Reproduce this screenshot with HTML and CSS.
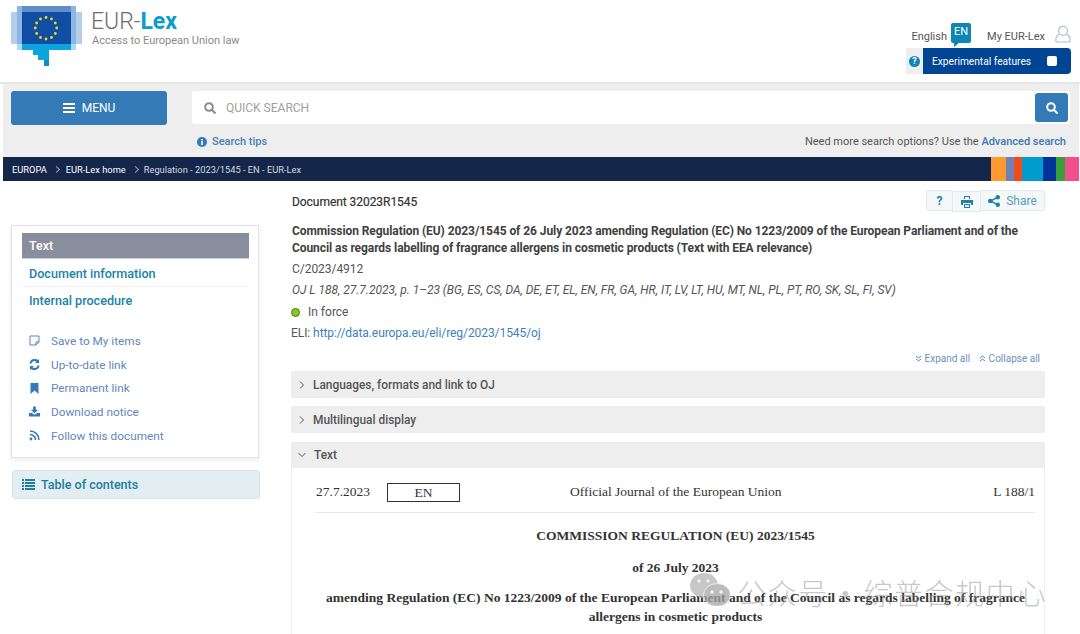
FILE: index.html
```html
<!DOCTYPE html>
<html lang="en">
<head>
<meta charset="utf-8">
<title>EUR-Lex - Regulation 2023/1545</title>
<link rel="stylesheet" href="styles.css">
</head>
<body>
<div class="page">
  <header class="top">
    <div class="brand">
      <svg class="logo" width="71" height="68" viewBox="0 0 71 68">
        <rect x="0" y="12" width="71" height="32" fill="#b4cdea"/>
        <rect x="6" y="6" width="59" height="44" fill="#8fb6e2"/>
        <rect x="11" y="6" width="49" height="6" fill="#5f8fcb"/>
        <rect x="11" y="12" width="49" height="32" fill="#0f4ea3"/>
        <rect x="6" y="44" width="59" height="6" fill="#a8dcf0"/>
        <rect x="11" y="44" width="49" height="6" fill="#0ba4dc"/>
        <rect x="22" y="50" width="16" height="5" fill="#0ba4dc"/>
        <rect x="27" y="55" width="11" height="5" fill="#0ba4dc"/>
        <rect x="33" y="60" width="5" height="6" fill="#0b8fc4"/>
        <g fill="#f5d327">
          <circle cx="35" cy="17.500" r="1.400"/><circle cx="40.500" cy="19" r="1.400"/><circle cx="44.300" cy="23" r="1.400"/>
          <circle cx="45.700" cy="28" r="1.400"/><circle cx="44.300" cy="33.500" r="1.400"/><circle cx="40.500" cy="37.500" r="1.400"/>
          <circle cx="35" cy="39" r="1.400"/><circle cx="29.500" cy="37.500" r="1.400"/><circle cx="25.700" cy="33.500" r="1.400"/>
          <circle cx="24.300" cy="28" r="1.400"/><circle cx="25.700" cy="23" r="1.400"/><circle cx="29.500" cy="19" r="1.400"/>
        </g>
      </svg>
      <div class="brand-text">
        <div class="brand-name">EUR-<b>Lex</b></div>
        <div class="brand-sub">Access to European Union law</div>
      </div>
    </div>
    <div class="tools">
      <div class="tools-row">
        <span class="lang">English</span>
        <span class="lang-badge">EN</span>
        <span class="my">My EUR-Lex</span>
        <svg class="user" width="16" height="18" viewBox="0 0 18 20" fill="none" stroke="#a9c3dc" stroke-width="1.400">
          <circle cx="9" cy="6.500" r="5"/>
          <path d="M5 10.500C2.500 11.500 1 13.500 1 16v1.500a1.500 1.500 0 0 0 1.500 1.500h13a1.500 1.500 0 0 0 1.500-1.500V16c0-2.500-1.500-4.500-4-5.500"/>
        </svg>
      </div>
      <div class="exp">
        <span class="exp-help"><span class="help-dot">?</span></span>
        <span class="exp-main">Experimental features<span class="exp-check"></span></span>
      </div>
    </div>
  </header>

  <section class="searchband">
    <div class="search-row">
      <button class="menu-btn">
        <svg width="12" height="10" viewBox="0 0 12 10" fill="#fff"><rect width="12" height="2"/><rect y="4" width="12" height="2"/><rect y="8" width="12" height="2"/></svg>
        MENU
      </button>
      <div class="search-box">
        <svg class="search-ico" width="12" height="12" viewBox="0 0 12 12" fill="none" stroke="#8a8a8a" stroke-width="2"><circle cx="5" cy="5" r="3.800"/><path d="M8 8l3.500 3.500"/></svg>
        <span class="search-ph">QUICK SEARCH</span>
        <span class="search-btn">
          <svg width="12" height="12" viewBox="0 0 12 12" fill="none" stroke="#fff" stroke-width="2"><circle cx="5" cy="5" r="3.800"/><path d="M8 8l3.500 3.500"/></svg>
        </span>
      </div>
    </div>
    <div class="tips-row">
      <span class="tips">
        <svg width="10" height="10" viewBox="0 0 10 10"><circle cx="5" cy="5" r="5" fill="#337ab7"/><rect x="4.200" y="4.200" width="1.600" height="3.800" fill="#fff"/><rect x="4.200" y="2" width="1.600" height="1.500" fill="#fff"/></svg>
        Search tips
      </span>
      <span class="adv">Need more search options? Use the <a>Advanced search</a></span>
    </div>
  </section>

  <nav class="crumbs">
    <span class="crumb-list">
      <span>EUROPA</span><i class="sep"></i><span>EUR-Lex home</span><i class="sep"></i><span class="cur">Regulation - 2023/1545 - EN - EUR-Lex</span>
    </span>
    <span class="flag">
      <i class="c1"></i><i class="c2"></i><i class="c3"></i><i class="c4"></i><i class="c5"></i><i class="c6"></i><i class="c7"></i>
    </span>
  </nav>

  <div class="content">
    <aside class="side">
      <div class="side-card">
        <div class="tab-active">Text</div>
        <div class="tab tab-line">Document information</div>
        <div class="tab">Internal procedure</div>
        <ul class="actions">
          <li>
            <svg width="11" height="11" viewBox="0 0 11 11" fill="none" stroke="#5a84b5" stroke-width="1"><path d="M1 1h9v6l-3 3H1z"/><path d="M7 10V7h3"/></svg>
            Save to My items
          </li>
          <li>
            <svg width="11" height="11" viewBox="0 0 11 11" fill="none" stroke="#337ab7" stroke-width="2"><path d="M1.500 4.500A4 4 0 0 1 9 3"/><path d="M9.500 6.500A4 4 0 0 1 2 8"/><path d="M10 0v4H6z" fill="#337ab7" stroke="none"/><path d="M1 11V7h4z" fill="#337ab7" stroke="none"/></svg>
            Up-to-date link
          </li>
          <li>
            <svg width="11" height="11" viewBox="0 0 11 11" fill="#337ab7"><path d="M1.500 0h8v11L5.500 7.500 1.500 11z"/></svg>
            Permanent link
          </li>
          <li>
            <svg width="12" height="11" viewBox="0 0 12 11" fill="#337ab7"><path d="M4.500 0h3v3.500H10L6 7.500 2 3.500h2.500z"/><path d="M0 7h3l3 2 3-2h3v4H0z"/></svg>
            Download notice
          </li>
          <li>
            <svg width="11" height="11" viewBox="0 0 11 11" fill="none" stroke="#337ab7" stroke-width="1.500"><circle cx="2" cy="9" r="1.400" fill="#337ab7" stroke="none"/><path d="M1 4.500A5.500 5.500 0 0 1 6.500 10"/><path d="M1 1a9 9 0 0 1 9 9"/></svg>
            Follow this document
          </li>
        </ul>
      </div>
      <div class="toc">
        <svg width="13" height="11" viewBox="0 0 13 11" fill="#1f7f9f"><rect width="2" height="2"/><rect x="3" width="10" height="2"/><rect y="3" width="2" height="2"/><rect x="3" y="3" width="10" height="2"/><rect y="6" width="2" height="2"/><rect x="3" y="6" width="10" height="2"/><rect y="9" width="2" height="2"/><rect x="3" y="9" width="10" height="2"/></svg>
        Table of contents
      </div>
    </aside>

    <main class="main">
      <div class="doc-head">
        <span class="doc-id">Document 32023R1545</span>
        <span class="doc-btns">
          <span class="btn btn-help">?</span>
          <span class="btn btn-print">
            <svg width="12" height="12" viewBox="0 0 12 12" fill="#1f7fa8"><path d="M3 0h6v3H8V1H4v2H3z"/><path d="M0 4h12v5H10V7H2v2H0z"/><path d="M3 8h6v4H3zm1 1v2h4V9z" fill-rule="evenodd"/></svg>
          </span>
          <span class="btn btn-share">
            <svg width="12" height="12" viewBox="0 0 12 12" fill="#1f7fa8" stroke="#1f7fa8"><circle cx="9.800" cy="2.300" r="2.200" stroke="none"/><circle cx="2.300" cy="6" r="2.300" stroke="none"/><circle cx="9.800" cy="9.700" r="2.200" stroke="none"/><path d="M9.800 2.300L2.300 6l7.500 3.700" fill="none" stroke-width="1.500"/></svg>
            Share
          </span>
        </span>
      </div>
      <h1 class="doc-title">Commission Regulation (EU) 2023/1545 of 26 July 2023 amending Regulation (EC) No 1223/2009 of the European Parliament and of the Council as regards labelling of fragrance allergens in cosmetic products (Text with EEA relevance)</h1>
      <p class="meta m-c">C/2023/4912</p>
      <p class="meta m-oj">OJ L 188, 27.7.2023, p. 1–23 (BG, ES, CS, DA, DE, ET, EL, EN, FR, GA, HR, IT, LV, LT, HU, MT, NL, PL, PT, RO, SK, SL, FI, SV)</p>
      <p class="meta m-force"><span class="dot"></span>In force</p>
      <p class="meta m-eli">ELI: <a>http://data.europa.eu/eli/reg/2023/1545/oj</a></p>
      <div class="expand">
        <span><svg width="7" height="7" viewBox="0 0 7 7" fill="none" stroke="#5a84b5"><path d="M1 1l2.500 2L6 1M1 4l2.500 2L6 4"/></svg> Expand all</span>
        <span><svg width="7" height="7" viewBox="0 0 7 7" fill="none" stroke="#5a84b5"><path d="M1 3l2.500-2L6 3M1 6l2.500-2L6 6"/></svg> Collapse all</span>
      </div>
      <div class="acc"><svg width="6" height="8" viewBox="0 0 6 8" fill="none" stroke="#555"><path d="M1 .5L4.500 4 1 7.500"/></svg>Languages, formats and link to OJ</div>
      <div class="acc"><svg width="6" height="8" viewBox="0 0 6 8" fill="none" stroke="#555"><path d="M1 .5L4.500 4 1 7.500"/></svg>Multilingual display</div>
      <div class="acc acc-open"><svg width="8" height="6" viewBox="0 0 8 6" fill="none" stroke="#555"><path d="M.5 1L4 4.500 7.500 1"/></svg>Text</div>
      <article class="oj">
        <div class="oj-head">
          <span class="oj-date">27.7.2023</span>
          <span class="oj-lang">EN</span>
          <span class="oj-name">Official Journal of the European Union</span>
          <span class="oj-page">L 188/1</span>
        </div>
        <p class="t1">COMMISSION REGULATION (EU) 2023/1545</p>
        <p class="t2">of 26 July 2023</p>
        <p class="t3">amending Regulation (EC) No 1223/2009 of the European Parliament and of the Council as regards labelling of fragrance allergens in cosmetic products</p>
      </article>
    </main>
  </div>

  <div class="watermark">
    <svg class="wm-icon" width="40" height="33" viewBox="0 0 40 33">
      <ellipse cx="14" cy="12.500" rx="14" ry="12.500" fill="#b5b5b5"/>
      <ellipse cx="27" cy="22" rx="13.500" ry="11.500" fill="#a6a6a6" stroke="#e8e8e8"/>
      <circle cx="9" cy="8" r="1.700" fill="#eee"/><circle cx="18" cy="8" r="1.700" fill="#eee"/>
      <circle cx="22" cy="19" r="1.700" fill="#eee"/><circle cx="31" cy="19" r="1.700" fill="#eee"/>
    </svg>
    <span class="wm-text">公众号 · 综普合规中心</span>
  </div>
</div>
</body>
</html>
```
FILE: styles.css
```css
* { box-sizing: border-box; }
html, body { margin: 0; padding: 0; height: 634px; overflow: hidden; background: #fff; }
body { font-family: Roboto, "Liberation Sans", sans-serif; font-size: 12px; color: #444; }
.page { position: relative; width: 1080px; height: 634px; overflow: hidden; }

/* header */
.top { height: 84px; display: flex; justify-content: space-between; padding: 0 9px 0 11px; border-bottom: 2px solid #e6e6e6; }
.brand { display: flex; align-items: flex-start; gap: 9px; }
.logo { display: block; }
.brand-text { padding-top: 8px; }
.brand-name { font-size: 23px; line-height: 27px; color: #6d6d6d; font-weight: 300; }
.brand-name b { color: #0b9bcf; font-weight: 700; }
.brand-sub { font-size: 11px; line-height: 13px; color: #8a8a8a; margin-top: -1px; padding-left: 1px; letter-spacing: -.01px; }
.tools { display: flex; flex-direction: column; align-items: flex-end; padding-top: 22px; }
.tools-row { display: flex; align-items: flex-start; height: 26px; font-size: 11px; color: #555; }
.lang { margin-top: 8px; margin-right: 4px; }
.lang-badge { position: relative; width: 20px; height: 20px; margin-top: 1px; background: #0e86b4; color: #fff; text-align: center; line-height: 18px; font-size: 11px; border-radius: 2px; margin-right: 16px; }
.lang-badge::after { content: ""; position: absolute; left: 3px; bottom: -4px; border-top: 5px solid #0e86b4; border-right: 6px solid transparent; }
.my { margin-top: 8px; margin-right: 10px; }
.user { margin-top: 3px; }
.exp { display: flex; height: 26px; width: 165px; }
.exp-help { width: 17px; background: #eee; display: flex; align-items: center; justify-content: center; }
.help-dot { width: 11px; height: 11px; border-radius: 50%; background: #0e86b4; color: #fff; font-size: 9px; font-weight: 700; line-height: 11px; text-align: center; }
.exp-main { flex: 1; background: #004494; color: #fff; font-size: 10.200px; display: flex; align-items: center; justify-content: space-between; padding: 0 14px 0 9px; border-radius: 0 4px 4px 0; }
.exp-check { width: 10px; height: 10px; background: #fff; border-radius: 2px; }

/* search */
.searchband { height: 73px; margin: 0 1px 0 3px; background: #eee; padding: 7px 9px 0 8px; }
.search-row { display: flex; gap: 25px; }
.menu-btn { width: 156px; height: 34px; border: 0; border-radius: 3px; background: #337ab7; color: #fff; font: 12px Roboto, sans-serif; display: flex; align-items: center; justify-content: center; gap: 7px; }
.search-box { flex: 1; height: 33px; background: #fff; border-radius: 3px; display: flex; align-items: center; padding: 0 2px 0 12px; }
.search-ico { margin-right: 10px; }
.search-ph { flex: 1; color: #a0a0a0; font-size: 12px; }
.search-btn { width: 33px; height: 29px; background: #337ab7; border-radius: 3px; display: flex; align-items: center; justify-content: center; }
.tips-row { display: flex; justify-content: space-between; padding: 10px 4px 0 186px; font-size: 11px; line-height: 14px; }
.tips { color: #4a7fb5; font-weight: 500; display: flex; align-items: center; gap: 5px; }
.adv { color: #555; }
.adv a { color: #3c78b0; font-weight: 500; }

/* breadcrumb */
.crumbs { height: 24px; margin: 0 1px 0 3px; background: #14264a; display: flex; justify-content: space-between; color: #fff; font-size: 9.300px; padding-left: 9px; }
.crumb-list { display: flex; align-items: center; }
.cur { color: #d6dae3; margin-left: -1px; }
.sep { width: 5px; height: 5px; border-top: 1px solid #98a2b5; border-right: 1px solid #98a2b5; transform: rotate(45deg); margin: 0 7px 0 7px; }
.flag { display: flex; }
.flag i { display: block; height: 24px; }
.c1 { width: 15px; background: #fe9a31; }
.c2 { width: 8px; background: #6e82b5; }
.c3 { width: 8px; background: #f14a1e; }
.c4 { width: 21px; background: #009cce; }
.c5 { width: 13px; background: #003399; }
.c6 { width: 9px; background: #399e3a; }
.c7 { width: 14px; background: #f0518e; }

/* layout */
.content { display: flex; padding: 0 35px 0 11px; gap: 32px; }
.side { width: 248px; flex: none; padding-top: 44px; }
.side-card { height: 233px; border: 1px solid #dde3e8; box-shadow: 0 2px 5px rgba(0,0,0,.08); padding: 7px 9px 0 10px; }
.tab-active { height: 26px; margin-bottom: 1px; background: #898e9e; border-bottom: 1px solid #c5cdd6; color: #fff; font-weight: 500; font-size: 12.500px; line-height: 25px; padding-left: 7px; }
.tab { height: 27px; color: #1a83a8; font-size: 12.600px; font-weight: 500; line-height: 28px; padding-left: 7px; }
.tab-line { border-bottom: 1px solid #eef0f2; }
.actions { list-style: none; margin: 15px 0 0; padding: 0 0 0 7px; color: #5f87ba; font-size: 11.800px; }
.actions li { height: 23.700px; display: flex; align-items: center; gap: 11px; }
.actions svg { width: 11px; flex: none; }
.toc { margin: 12px -1px 0 1px; height: 29px; background: #e3eef3; border: 1px solid #d5e2e9; border-radius: 3px; color: #1a7da0; font-size: 12.500px; font-weight: 500; display: flex; align-items: center; gap: 6px; padding-left: 9px; }

/* main */
.main { width: 754px; flex: none; }
.doc-head { height: 42px; display: flex; justify-content: space-between; padding-top: 9px; }
.doc-id { font-size: 12px; line-height: 24px; font-weight: 400; color: #333; padding-left: 1px; -webkit-text-stroke: .2px #333; letter-spacing: -.05px; }
.doc-btns { display: flex; height: 21px; }
.btn { display: flex; align-items: center; justify-content: center; border: 1px solid #e2eaee; background: #f5f8f9; color: #1f7fa8; }
.btn-help { width: 27px; font-weight: 700; border-radius: 3px 0 0 3px; }
.btn-print { width: 29px; margin: 1px 0 -1px -1px; }
.btn-share { width: 64px; gap: 6px; border-radius: 0 3px 3px 0; color: #5a9cbd; border-left: 0; }
.doc-title { margin: 0; padding-left: 1px; font-size: 12px; line-height: 17px; font-weight: 700; color: #404040; letter-spacing: -.075px; }
.meta { margin: 0; padding-left: 1px; font-size: 12px; line-height: 16px; color: #555; }
.m-c { margin-top: 4px; letter-spacing: -.04px; }
.m-oj { margin-top: 5px; font-style: italic; letter-spacing: -.02px; }
.m-force { margin-top: 6px; padding-left: 0; display: flex; align-items: center; }
.dot { width: 9px; height: 9px; border-radius: 50%; background: #8cc620; border: 1px solid #4f7a12; margin-right: 8px; }
.m-eli { margin-top: 5px; padding-left: 0; letter-spacing: -.07px; }
.m-eli a { color: #3c82bb; }
.expand { display: flex; justify-content: flex-end; gap: 9px; height: 30px; padding: 12px 5px 0 0; color: #6d8fbe; font-size: 10px; line-height: 12px; }
.acc { height: 27px; background: #eee; margin-bottom: 8px; display: flex; align-items: center; gap: 8px; padding-left: 8px; font-size: 11.900px; font-weight: 500; color: #555; }
.acc-open { height: 26px; margin: 9px 0 0; }
.acc-open svg { margin-left: -1px; }
.oj { border-left: 1px solid #eee; border-right: 1px solid #eee; padding: 0 9px 0 24px; height: 170px; font-family: "Liberation Serif", serif; color: #333; }
.oj-head { height: 45px; padding-top: 4px; display: flex; align-items: center; border-bottom: 1px solid #e8e8e8; font-size: 13.500px; }
.oj-date { width: 71px; }
.oj-lang { width: 73px; height: 19px; border: 1px solid #333; text-align: center; line-height: 17px; }
.oj-name { margin-left: 110px; }
.oj-page { margin-left: auto; }
.t1, .t2, .t3 { margin: 0; text-align: center; font-weight: 700; font-size: 13.500px; line-height: 19px; }
.t1 { margin-top: 13px; }
.t2 { margin-top: 13px; }
.t3 { margin-top: 12px; line-height: 18.500px; }

/* watermark */
.watermark { position: absolute; left: 690px; top: 573px; display: flex; align-items: flex-start; gap: 7px; pointer-events: none; }
.wm-icon { opacity: .75; }
.wm-text { font-family: "Noto Sans CJK SC", sans-serif; font-size: 29px; line-height: 38px; color: rgba(150,150,150,.55); font-weight: 300; letter-spacing: 1.600px; word-spacing: -6px; white-space: nowrap; }
```
